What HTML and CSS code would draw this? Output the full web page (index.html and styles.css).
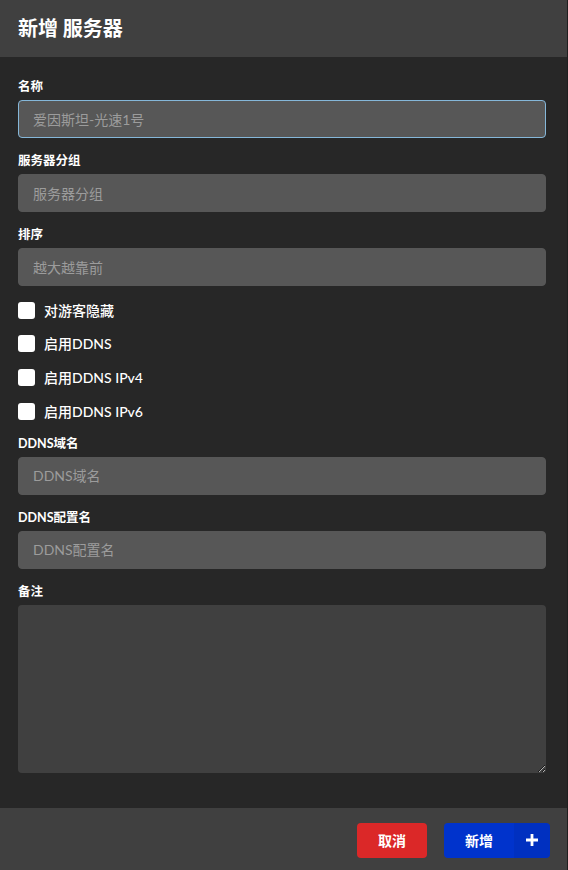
FILE: index.html
```html
<!DOCTYPE html>
<html lang="zh-CN">
<head>
<meta charset="utf-8">
<title>新增 服务器</title>
<link rel="stylesheet" href="styles.css">
</head>
<body>
<div class="modal">
  <div class="header">新增 服务器</div>
  <div class="content">
    <form class="form">
      <div class="field">
        <label class="label">名称</label>
        <input class="input focus" type="text" placeholder="爱因斯坦-光速1号">
      </div>
      <div class="field">
        <label class="label">服务器分组</label>
        <input class="input" type="text" placeholder="服务器分组">
      </div>
      <div class="field">
        <label class="label">排序</label>
        <input class="input" type="text" placeholder="越大越靠前">
      </div>
      <div class="check"><span class="box"></span><span class="check-text">对游客隐藏</span></div>
      <div class="check"><span class="box"></span><span class="check-text">启用DDNS</span></div>
      <div class="check"><span class="box"></span><span class="check-text">启用DDNS IPv4</span></div>
      <div class="check"><span class="box"></span><span class="check-text">启用DDNS IPv6</span></div>
      <div class="field">
        <label class="label">DDNS域名</label>
        <input class="input" type="text" placeholder="DDNS域名">
      </div>
      <div class="field">
        <label class="label">DDNS配置名</label>
        <input class="input" type="text" placeholder="DDNS配置名">
      </div>
      <div class="field last">
        <label class="label">备注</label>
        <textarea class="textarea"></textarea>
      </div>
    </form>
  </div>
  <div class="actions">
    <button class="btn cancel" type="button">取消</button>
    <button class="btn add" type="button"><span class="btn-text">新增</span><span class="btn-icon"><svg width="12" height="12" viewBox="0 0 12 12"><path d="M4.6 0h2.8v4.6H12v2.8H7.4V12H4.6V7.4H0V4.6h4.6z" fill="#fff"/></svg></span></button>
  </div>
</div>
</body>
</html>
```

FILE: styles.css
```css
* { box-sizing: border-box; }
html, body { margin: 0; padding: 0; }
body {
  background: #1f1f1f;
  font-family: Lato, "Noto Sans CJK SC", sans-serif;
  color: #fff;
  width: 568px;
  height: 870px;
  overflow: hidden;
}
.modal {
  width: 567px;
  background: #272727;
}
.header {
  background: #404040;
  height: 57px;
  padding: 16px 18px;
  font-size: 20px;
  line-height: 25px;
  font-weight: 700;
}
.content {
  padding: 21px 21px 35px 18px;
}
.form { display: flex; flex-direction: column; }
.field {
  display: flex;
  flex-direction: column;
  margin-bottom: 14px;
}
.field.last { margin-bottom: 0; }
.label {
  font-size: 12.5px;
  font-weight: 700;
  line-height: 18px;
  margin-bottom: 4px;
  color: #fff;
}
.input {
  height: 38px;
  width: 528px;
  background: #575757;
  border: 1px solid #575757;
  border-radius: 4px;
  padding: 0 14px;
  font-family: Lato, "Noto Sans CJK SC", sans-serif;
  font-size: 14px;
  color: #fff;
  outline: none;
}
.input.focus { border-color: #85b7d9; }
.input::placeholder { color: #9c9c9c; }
.textarea {
  width: 528px;
  height: 168px;
  background: #404040;
  border: none;
  border-radius: 4px;
  padding: 11px 14px;
  font-family: Lato, "Noto Sans CJK SC", sans-serif;
  font-size: 14px;
  color: #fff;
  outline: none;
}
.check {
  display: flex;
  align-items: center;
  height: 20px;
  margin-bottom: 13.7px;
}
.box {
  width: 17px;
  height: 17px;
  background: #fff;
  border-radius: 3px;
  margin-right: 9px;
  flex: none;
}
.check-text {
  font-size: 14px;
  font-weight: 500;
  color: #fff;
  line-height: 17px;
}
.actions {
  background: #404040;
  height: 62px;
  padding: 15px 17px 0 0;
  display: flex;
  justify-content: flex-end;
  align-items: flex-start;
  gap: 17px;
}
.btn {
  height: 35px;
  border: none;
  border-radius: 4px;
  font-family: Lato, "Noto Sans CJK SC", sans-serif;
  font-size: 14px;
  font-weight: 700;
  color: #fff;
  padding: 0;
  display: flex;
  align-items: center;
}
.cancel {
  background: #db2828;
  width: 70px;
  justify-content: center;
}
.add {
  background: #0033cc;
  width: 106px;
  overflow: hidden;
}
.btn-text { padding-left: 21px; flex: 1; text-align: left; }
.btn-icon {
  width: 36px;
  height: 35px;
  display: flex;
  align-items: center;
  justify-content: center;
  background: rgba(0,0,0,0.06);
}
```
